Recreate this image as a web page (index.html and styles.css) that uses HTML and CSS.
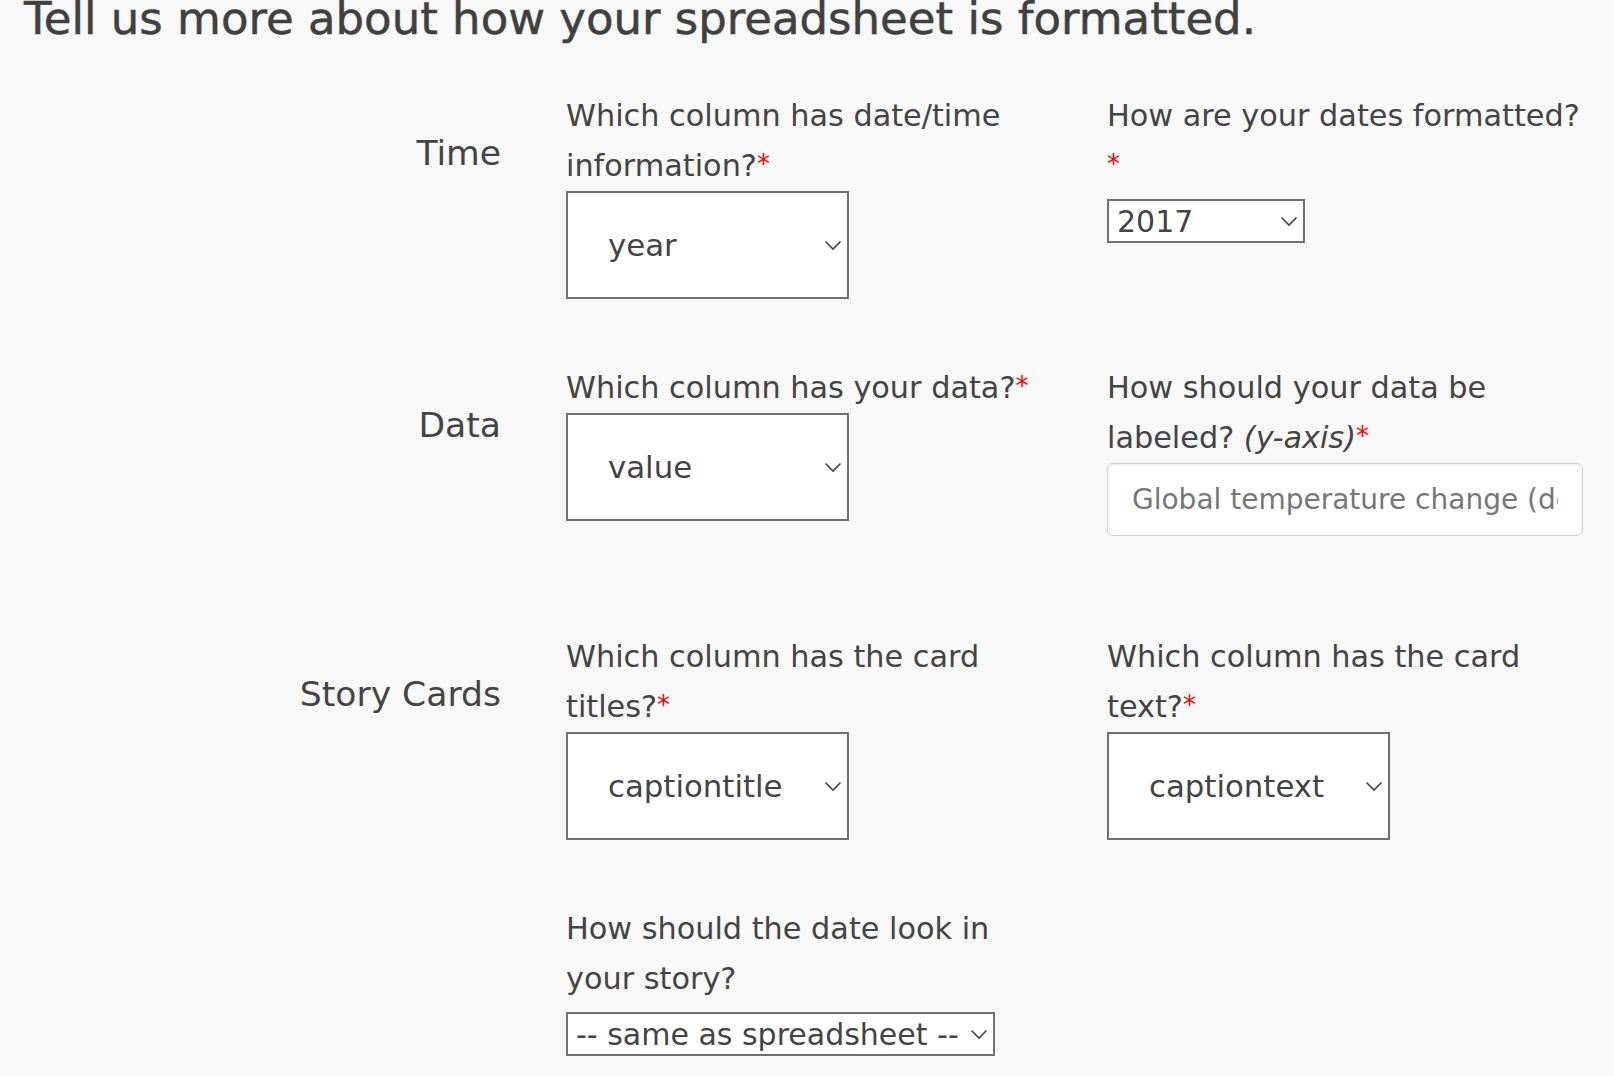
FILE: index.html
```html
<!DOCTYPE html>
<html lang="en">
<head>
<meta charset="utf-8">
<title>Spreadsheet format</title>
<link rel="stylesheet" href="styles.css">
</head>
<body>
<main class="page">
  <h1 class="title">Tell us more about how your spreadsheet is formatted.</h1>

  <section class="row">
    <h2 class="section-label">Time</h2>
    <div class="field">
      <label class="field-label" for="timecol">Which column has date/time information?<span class="req">*</span></label>
      <div class="select-wrap big">
        <select id="timecol" class="select big"><option>year</option></select>
        <svg class="chev" width="18" height="11" viewBox="0 0 18 11"><polyline points="1.5,1.5 9,9 16.5,1.5" fill="none" stroke="#444" stroke-width="1.6"/></svg>
      </div>
    </div>
    <div class="field">
      <label class="field-label" for="datefmt">How are your dates formatted?<br><span class="req">*</span></label>
      <div class="select-wrap small w-date">
        <select id="datefmt" class="select small"><option>2017</option></select>
        <svg class="chev" width="18" height="11" viewBox="0 0 18 11"><polyline points="1.5,1.5 9,9 16.5,1.5" fill="none" stroke="#444" stroke-width="1.6"/></svg>
      </div>
    </div>
  </section>

  <section class="row row-data">
    <h2 class="section-label">Data</h2>
    <div class="field">
      <label class="field-label" for="datacol">Which column has your data?<span class="req">*</span></label>
      <div class="select-wrap big">
        <select id="datacol" class="select big"><option>value</option></select>
        <svg class="chev" width="18" height="11" viewBox="0 0 18 11"><polyline points="1.5,1.5 9,9 16.5,1.5" fill="none" stroke="#444" stroke-width="1.6"/></svg>
      </div>
    </div>
    <div class="field">
      <label class="field-label" for="ylabel">How should your data be labeled? <em>(y-axis)</em><span class="req">*</span></label>
      <input id="ylabel" class="text-input" type="text" placeholder="Global temperature change (degrees Celsius)">
    </div>
  </section>

  <section class="row">
    <h2 class="section-label">Story Cards</h2>
    <div class="field">
      <label class="field-label" for="titlecol">Which column has the card titles?<span class="req">*</span></label>
      <div class="select-wrap big">
        <select id="titlecol" class="select big"><option>captiontitle</option></select>
        <svg class="chev" width="18" height="11" viewBox="0 0 18 11"><polyline points="1.5,1.5 9,9 16.5,1.5" fill="none" stroke="#444" stroke-width="1.6"/></svg>
      </div>
    </div>
    <div class="field">
      <label class="field-label" for="textcol">Which column has the card text?<span class="req">*</span></label>
      <div class="select-wrap big">
        <select id="textcol" class="select big"><option>captiontext</option></select>
        <svg class="chev" width="18" height="11" viewBox="0 0 18 11"><polyline points="1.5,1.5 9,9 16.5,1.5" fill="none" stroke="#444" stroke-width="1.6"/></svg>
      </div>
    </div>
  </section>

  <section class="row">
    <div class="section-label"></div>
    <div class="field">
      <label class="field-label" for="storydate">How should the date look in your story?</label>
      <div class="select-wrap small w-story">
        <select id="storydate" class="select small"><option>-- same as spreadsheet --</option></select>
        <svg class="chev" width="18" height="11" viewBox="0 0 18 11"><polyline points="1.5,1.5 9,9 16.5,1.5" fill="none" stroke="#444" stroke-width="1.6"/></svg>
      </div>
    </div>
    <div class="field"></div>
  </section>
</main>
</body>
</html>
```

FILE: styles.css
```css
html, body {
  margin: 0;
  padding: 0;
  background: #f8f8f8;
}

body {
  font-family: "DejaVu Sans", "Liberation Sans", sans-serif;
  color: #444;
}

.page {
  padding: 0 0 40px 24px;
}

.title {
  margin: 0 0 53px 0;
  font-size: 45px;
  line-height: 38px;
  font-weight: normal;
  color: #404040;
  white-space: nowrap;
  -webkit-text-stroke: 0.5px #404040;
}

.row {
  display: grid;
  grid-template-columns: 477px 476px 476px;
  column-gap: 65px;
  align-items: start;
  margin-bottom: 64px;
}

.section-label {
  margin: 37px 0 0 0;
  font-size: 34.6px;
  line-height: 50px;
  font-weight: normal;
  text-align: right;
  color: #444;
}

.field {
  display: flex;
  flex-direction: column;
  align-items: flex-start;
}

.field-label {
  display: block;
  font-size: 30.3px;
  line-height: 50px;
  color: #444;
}

.field-label em {
  font-style: italic;
}

.req {
  color: #ff0000;
  font-size: 26px;
  line-height: 0;
  vertical-align: 3px;
}

.select-wrap {
  position: relative;
}

.select-wrap.big {
  width: 283px;
  height: 108px;
}

.select-wrap.small {
  height: 44px;
  margin-top: 8px;
}

.w-date {
  width: 198px;
}

.w-story {
  width: 429px;
}

.select {
  -webkit-appearance: none;
  appearance: none;
  box-sizing: border-box;
  width: 100%;
  height: 100%;
  margin: 0;
  border: 2px solid #707070;
  border-radius: 0;
  background: #fff;
  font-family: "DejaVu Sans", "Liberation Sans", sans-serif;
  font-size: 30px;
  color: #444;
  outline: none;
}

.select.big {
  padding: 0 30px 0 40px;
  font-size: 30.8px;
}

.select.small {
  padding: 0 28px 0 8px;
}

.chev {
  position: absolute;
  right: 7px;
  top: 50%;
  margin-top: -5px;
  pointer-events: none;
}

.text-input {
  box-sizing: border-box;
  width: 476px;
  height: 73px;
  margin: 0 0 32px 0;
  padding: 0 24px;
  border: 1px solid #cfcfcf;
  border-radius: 6px;
  background: #fff;
  box-shadow: inset 0 1px 3px rgba(0, 0, 0, 0.08);
  font-family: "DejaVu Sans", "Liberation Sans", sans-serif;
  font-size: 28px;
  color: #444;
  outline: none;
}

.text-input::placeholder {
  color: #777;
  opacity: 1;
}
```
